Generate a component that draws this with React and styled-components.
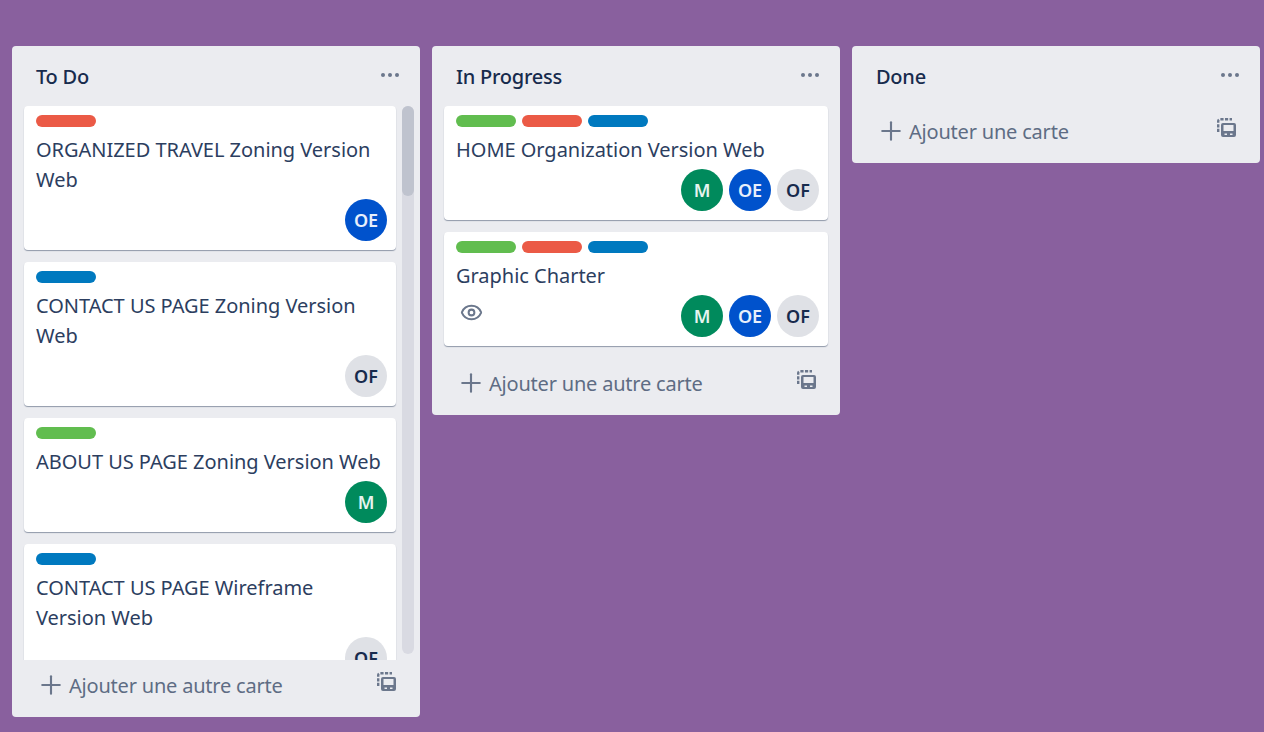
import React from 'react';
import styled, { createGlobalStyle } from 'styled-components';
import { Plus, Eye } from 'lucide-react';

const GlobalStyle = createGlobalStyle`
  html, body { margin: 0; padding: 0; height: 100%; }
  body {
    background: #89609e;
    font-family: "Noto Sans", "Open Sans", sans-serif;
    color: #172b4d;
  }
`;

const Board = styled.div`
  box-sizing: border-box;
  height: 100vh;
  padding: 46px 12px 15px;
  display: flex;
  align-items: flex-start;
  gap: 12px;
  overflow: hidden;
`;

const List = styled.section`
  flex: none;
  width: 408px;
  max-height: 100%;
  display: flex;
  flex-direction: column;
  background: #ebecf0;
  border-radius: 4px;
`;

const ListHeader = styled.header`
  height: 60px;
  flex: none;
  box-sizing: border-box;
  padding: 2px 21px 0 24px;
  display: flex;
  align-items: center;
  justify-content: space-between;
`;

const ListTitle = styled.h2`
  margin: 0;
  font-size: 20px;
  font-weight: 500;
  line-height: 28px;
  letter-spacing: -0.25px;
  color: #172b4d;
`;

const Dots = styled.span`
  display: flex;
  gap: 3px;
  margin-bottom: 4px;

  i {
    width: 4px;
    height: 4px;
    border-radius: 50%;
    background: #6b778c;
  }
`;

const CardArea = styled.div`
  position: relative;
  flex: 1;
  min-height: 0;
  overflow: hidden;
  padding: 0 ${(p) => (p.$scroll ? '24px' : '12px')} 0 12px;
`;

const Track = styled.div`
  position: absolute;
  top: 0;
  right: 6px;
  bottom: 6px;
  width: 12px;
  border-radius: 6px;
  background: #d9dae2;
`;

const Thumb = styled.div`
  height: 90px;
  border-radius: 6px;
  background: #bfc3ce;
`;

const Card = styled.article`
  box-sizing: border-box;
  padding: 9px 9px 9px 12px;
  margin-bottom: 12px;
  background: #fff;
  border-radius: 4px;
  box-shadow: 0 1px 1px rgba(9, 30, 66, 0.4);
`;

const Labels = styled.div`
  display: flex;
  gap: 6px;
  margin-bottom: 8px;
`;

const Label = styled.span`
  width: 60px;
  height: 12px;
  border-radius: 6px;
  background: ${(p) => p.$color};
`;

const CardTitle = styled.div`
  font-size: 20px;
  line-height: 30px;
  letter-spacing: -0.03px;
  color: #2c3e5f;
  margin-bottom: 4px;
  padding-right: 3px;
`;

const CardBottom = styled.div`
  display: flex;
  align-items: flex-start;
  justify-content: space-between;
  color: #6b778c;
`;

const Badge = styled.span`
  display: flex;
  margin: 6px 0 0 4px;
`;

const Avatars = styled.div`
  display: flex;
  gap: 6px;
  margin-left: auto;
`;

const Avatar = styled.span`
  width: 42px;
  height: 42px;
  border-radius: 50%;
  display: flex;
  align-items: center;
  justify-content: center;
  font-size: 18px;
  font-weight: 600;
  background: ${(p) => p.$bg};
  color: ${(p) => p.$fg};
`;

const ListFooter = styled.footer`
  height: 57px;
  flex: none;
  box-sizing: border-box;
  padding: 0 24px 5px 24px;
  display: flex;
  align-items: center;
  color: #6b778c;

  > svg:first-child {
    margin-bottom: 3px;
  }
`;

const AddText = styled.span`
  margin-left: 3px;
  flex: 1;
  font-size: 20px;
  letter-spacing: -0.2px;
  line-height: 30px;
  color: #5e6c84;
`;

const TemplateSvg = styled.svg`
  display: block;
  margin-bottom: 9px;
`;

const TemplateIcon = () => (
  <TemplateSvg width="19" height="19" viewBox="0 0 19 19">
    <path
      d="M1.200 14V3.200a2 2 0 0 1 2-2H15"
      fill="none"
      stroke="#6b778c"
      strokeWidth="2.400"
      strokeDasharray="3.200 1.400"
    />
    <path
      fillRule="evenodd"
      fill="#6b778c"
      d="M6 5h11a2 2 0 0 1 2 2v10a2 2 0 0 1-2 2H6a2 2 0 0 1-2-2V7a2 2 0 0 1 2-2zm.500 2v6h10V7zm1 8.500v1.400h2.500v-1.400zm5.500 0v1.400h2.500v-1.400z"
    />
  </TemplateSvg>
);

const GREEN = '#61bd4f';
const RED = '#eb5a46';
const BLUE = '#0079bf';

const people = {
  M: { bg: '#008a5c', fg: '#e6f4ef' },
  OE: { bg: '#0052cc', fg: '#e8effb' },
  OF: { bg: '#dfe1e6', fg: '#172b4d' },
};

const lists = [
  {
    title: 'To Do',
    add: 'Ajouter une autre carte',
    scroll: true,
    cards: [
      { labels: [RED], title: 'ORGANIZED TRAVEL Zoning Version Web', members: ['OE'] },
      { labels: [BLUE], title: 'CONTACT US PAGE Zoning Version Web', members: ['OF'] },
      { labels: [GREEN], title: 'ABOUT US PAGE Zoning Version Web', members: ['M'] },
      { labels: [BLUE], title: 'CONTACT US PAGE Wireframe Version Web', members: ['OF'] },
    ],
  },
  {
    title: 'In Progress',
    add: 'Ajouter une autre carte',
    cards: [
      { labels: [GREEN, RED, BLUE], title: 'HOME Organization Version Web', members: ['M', 'OE', 'OF'] },
      { labels: [GREEN, RED, BLUE], title: 'Graphic Charter', members: ['M', 'OE', 'OF'], watched: true },
    ],
  },
  { title: 'Done', add: 'Ajouter une carte', cards: [] },
];

const App = () => (
  <>
    <GlobalStyle />
    <Board>
      {lists.map((list) => (
        <List key={list.title}>
          <ListHeader>
            <ListTitle>{list.title}</ListTitle>
            <Dots><i /><i /><i /></Dots>
          </ListHeader>
          {list.cards.length > 0 && (
            <CardArea $scroll={list.scroll}>
              {list.cards.map((card) => (
                <Card key={card.title}>
                  <Labels>
                    {card.labels.map((color) => (
                      <Label key={color} $color={color} />
                    ))}
                  </Labels>
                  <CardTitle>{card.title}</CardTitle>
                  <CardBottom>
                    {card.watched && (
                      <Badge><Eye size={23} strokeWidth={2.1} /></Badge>
                    )}
                    <Avatars>
                      {card.members.map((m) => (
                        <Avatar key={m} $bg={people[m].bg} $fg={people[m].fg}>{m}</Avatar>
                      ))}
                    </Avatars>
                  </CardBottom>
                </Card>
              ))}
              {list.scroll && (
                <Track><Thumb /></Track>
              )}
            </CardArea>
          )}
          <ListFooter>
            <Plus size={30} strokeWidth={1.7} />
            <AddText>{list.add}</AddText>
            <TemplateIcon />
          </ListFooter>
        </List>
      ))}
    </Board>
  </>
);

export default App;
